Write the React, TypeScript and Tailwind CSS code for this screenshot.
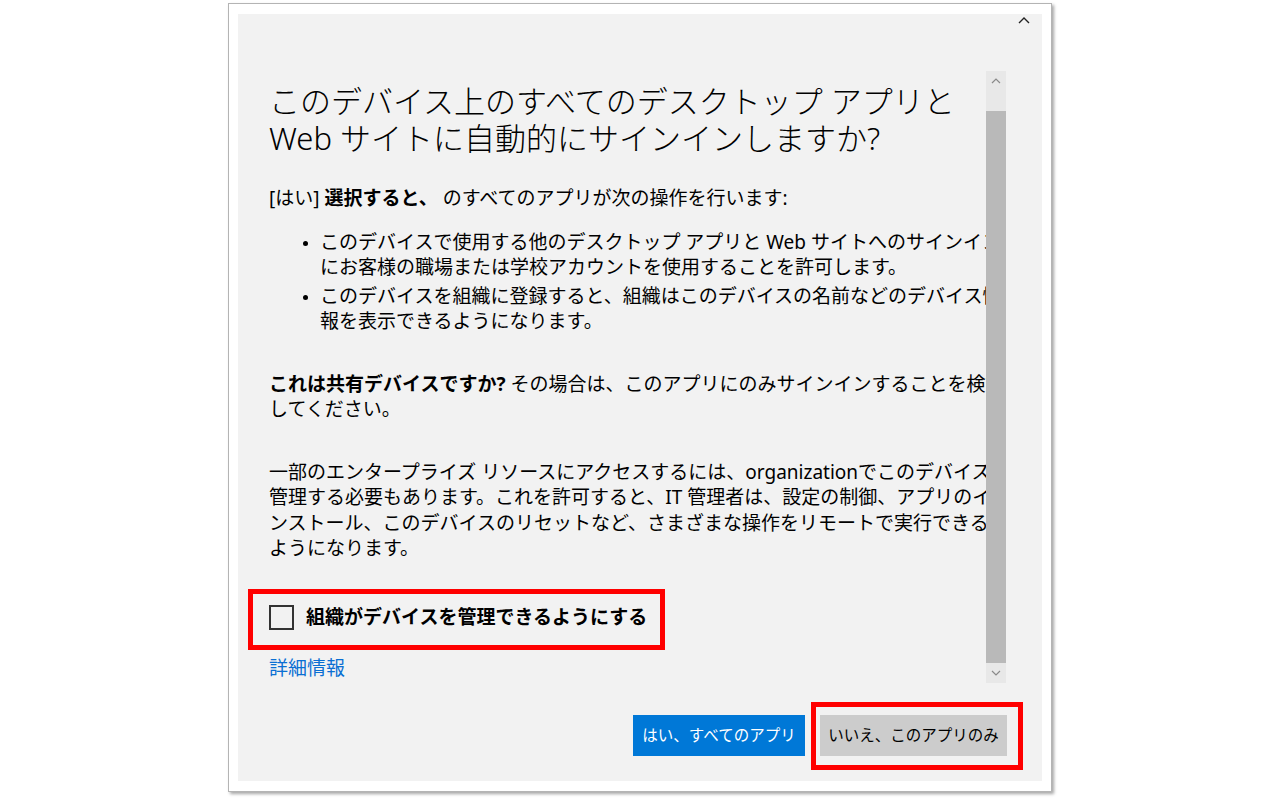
import React from "react"

const FONT = {
  fontFamily: '"Noto Sans", "Noto Sans CJK JP", sans-serif',
}

function Bullet({ lines }: { lines: string[] }) {
  return (
    <div className="flex">
      <div className="w-[51px] shrink-0 pt-[11px]">
        <div className="ml-[34px] w-[5px] h-[5px] rounded-full bg-black" />
      </div>
      <p className="whitespace-nowrap">
        {lines.map((l, i) => (
          <span key={i} className="block">
            {l}
          </span>
        ))}
      </p>
    </div>
  )
}

export default function App() {
  return (
    <div className="min-h-screen bg-white pl-[228px] pt-[3px]" style={FONT}>
      {/* ventana */}
      <div className="w-[824px] h-[789px] border border-[#b4b4b4] bg-white pl-[9px] pt-[10px] shadow-[2px_2px_3px_rgba(0,0,0,0.35)]">
        <div className="relative w-[804px] h-[767px] bg-[#f2f2f2] text-black">
          {/* chevron arriba */}
          <svg
            className="absolute top-[2px] right-[12px]"
            width="12"
            height="8"
            viewBox="0 0 12 8"
          >
            <polyline
              points="1,7 6,2 11,7"
              fill="none"
              stroke="#222"
              strokeWidth="1.4"
            />
          </svg>

          <div className="flex pt-[57px] pl-[10px]">
            {/* contenido con scroll */}
            <div className="w-[738px] h-[612px] overflow-hidden pl-[21px] text-[19px] leading-[25.5px]">
              <h1 className="pt-[12px] text-[31px] leading-[37px] font-light whitespace-nowrap">
                このデバイス上のすべてのデスクトップ アプリと
                <br />
                Web サイトに自動的にサインインしますか?
              </h1>

              <p className="mt-[29px] whitespace-nowrap">
                [はい] <span className="font-bold">選択すると、</span>{" "}
                のすべてのアプリが次の操作を行います:
              </p>

              <div className="mt-[18px] space-y-[3px]">
                <Bullet
                  lines={[
                    "このデバイスで使用する他のデスクトップ アプリと Web サイトへのサインイン",
                    "にお客様の職場または学校アカウントを使用することを許可します。",
                  ]}
                />
                <Bullet
                  lines={[
                    "このデバイスを組織に登録すると、組織はこのデバイスの名前などのデバイス情",
                    "報を表示できるようになります。",
                  ]}
                />
              </div>

              <p className="mt-[37px] whitespace-nowrap">
                <span className="font-bold">これは共有デバイスですか?</span>{" "}
                その場合は、このアプリにのみサインインすることを検討
                <br />
                してください。
              </p>

              <p className="mt-[37px] whitespace-nowrap">
                一部のエンタープライズ リソースにアクセスするには、organizationでこのデバイスを
                <br />
                管理する必要もあります。これを許可すると、IT 管理者は、設定の制御、アプリのイ
                <br />
                ンストール、このデバイスのリセットなど、さまざまな操作をリモートで実行できる
                <br />
                ようになります。
              </p>

              {/* checkbox */}
              <div className="relative mt-[43px] flex items-center gap-[12px] w-[378px]">
                <div className="w-[25px] h-[25px] border-[2.5px] border-[#333] shrink-0" />
                <span className="text-[19px] font-bold whitespace-nowrap">
                  組織がデバイスを管理できるようにする
                </span>
                <div className="absolute left-[-21px] right-[-18px] top-[-16px] bottom-[-20px] border-[5px] border-[#ff0000]" />
              </div>

              <p className="mt-[26px] text-[19px] text-[#0a6fd3]">詳細情報</p>
            </div>

            {/* scrollbar */}
            <div className="w-[20px] h-[612px] bg-[#e8e8e8] flex flex-col">
              <div className="h-[20px] flex items-center justify-center">
                <svg width="10" height="6" viewBox="0 0 10 6">
                  <polyline
                    points="1,5 5,1 9,5"
                    fill="none"
                    stroke="#8a8a8a"
                    strokeWidth="1.2"
                  />
                </svg>
              </div>
              <div className="h-[20px]" />
              <div className="flex-1 bg-[#b9b9b9]" />
              <div className="h-[20px] flex items-center justify-center">
                <svg width="10" height="6" viewBox="0 0 10 6">
                  <polyline
                    points="1,1 5,5 9,1"
                    fill="none"
                    stroke="#8a8a8a"
                    strokeWidth="1.2"
                  />
                </svg>
              </div>
            </div>
          </div>

          {/* botones */}
          <div className="flex justify-end gap-[15px] pr-[35px] mt-[32px]">
            <button className="w-[172px] h-[41px] bg-[#0078d7] text-white text-[15.5px]">
              はい、すべてのアプリ
            </button>
            <div className="relative">
              <button className="w-[187px] h-[41px] bg-[#cccccc] text-black text-[15.5px]">
                いいえ、このアプリのみ
              </button>
              <div className="absolute left-[-9px] right-[-16px] top-[-13px] bottom-[-14px] border-[5px] border-[#ff0000]" />
            </div>
          </div>
        </div>
      </div>
    </div>
  )
}
